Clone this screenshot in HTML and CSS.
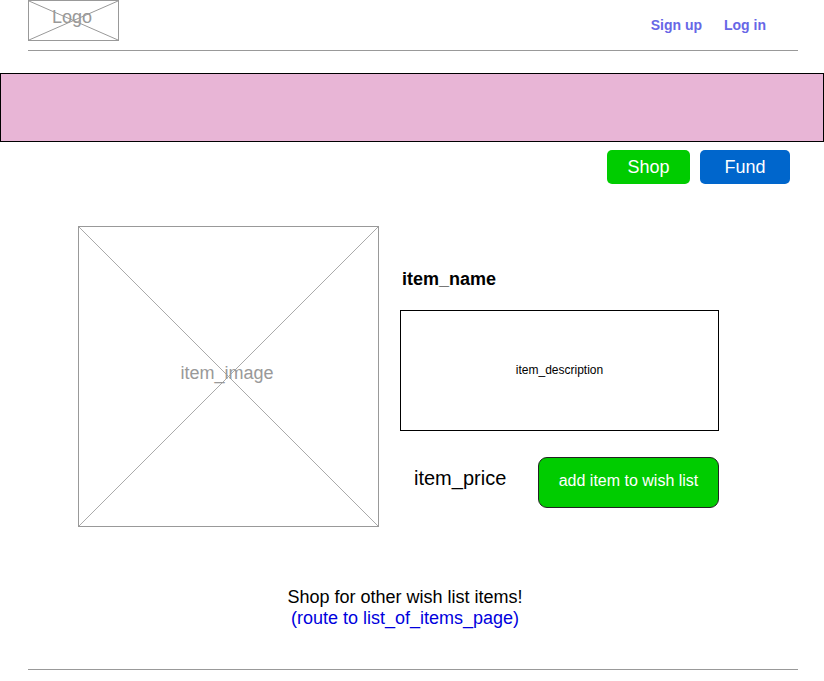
FILE: index.html
```html
<!DOCTYPE html>
<html>
<head>
<meta charset="utf-8">
<link rel="stylesheet" href="styles.css">
</head>
<body>
<header class="top">
  <div class="logo">
    <svg class="xlines" viewBox="0 0 100 100" preserveAspectRatio="none"><line x1="0" y1="0" x2="100" y2="100" vector-effect="non-scaling-stroke"/><line x1="100" y1="0" x2="0" y2="100" vector-effect="non-scaling-stroke"/></svg>
    <span class="logo-text">Logo</span>
  </div>
  <nav class="nav">
    <a class="nav-link">Sign up</a>
    <a class="nav-link">Log in</a>
  </nav>
</header>
<div class="banner"></div>
<div class="actions">
  <button class="btn btn-shop">Shop</button>
  <button class="btn btn-fund">Fund</button>
</div>
<main class="product">
  <div class="image">
    <svg class="xlines" viewBox="0 0 100 100" preserveAspectRatio="none"><line x1="0" y1="0" x2="100" y2="100" vector-effect="non-scaling-stroke"/><line x1="100" y1="0" x2="0" y2="100" vector-effect="non-scaling-stroke"/></svg>
    <span class="image-text">item_image</span>
  </div>
  <div class="details">
    <div class="item-name">item_name</div>
    <div class="desc">item_description</div>
    <div class="price-row">
      <div class="price">item_price</div>
      <button class="add-btn">add item to wish list</button>
    </div>
  </div>
</main>
<section class="more">
  <div class="more-text">Shop for other wish list items!</div>
  <a class="more-link">(route to list_of_items_page)</a>
</section>
<div class="bottom-line"></div>
</body>
</html>
```
FILE: styles.css
```css
* { box-sizing: border-box; }
body {
  margin: 0;
  font-family: "Liberation Sans", Arial, sans-serif;
  color: #000;
  background: #fff;
}
.top {
  margin-left: 28px;
  width: 770px;
  height: 51px;
  border-bottom: 1px solid #999;
  display: flex;
  justify-content: space-between;
  align-items: flex-start;
}
.logo {
  position: relative;
  width: 91px;
  height: 41px;
  border: 1px solid #999;
  display: flex;
  justify-content: center;
  padding-top: 6px;
  padding-right: 3px;
}
.xlines {
  position: absolute;
  left: 0; top: 0;
  width: 100%; height: 100%;
  stroke: #999;
  stroke-width: 1;
}
.image .xlines { stroke: #aaa; }
.logo-text {
  position: relative;
  font-size: 18px;
  line-height: 21px;
  color: #999;
}
.nav {
  display: flex;
  gap: 22px;
  padding-right: 32px;
  padding-top: 17px;
}
.nav-link {
  font-size: 14px;
  line-height: 16px;
  font-weight: bold;
  color: #6767e6;
}
.banner {
  margin-top: 22px;
  height: 69px;
  background: #e8b5d6;
  border: 1px solid #000;
}
.actions {
  margin-top: 8px;
  display: flex;
  justify-content: flex-end;
  gap: 10px;
  padding-right: 34px;
}
.btn {
  height: 34px;
  border: none;
  border-radius: 5px;
  color: #fff;
  font-family: "Liberation Sans", Arial, sans-serif;
  font-size: 18px;
  padding: 0;
}
.btn-shop { width: 83px; background: #00cc00; }
.btn-fund { width: 90px; background: #0066cc; }
.product {
  margin-top: 42px;
  padding-left: 78px;
  display: flex;
  gap: 21px;
}
.image {
  position: relative;
  width: 301px;
  height: 301px;
  border: 1px solid #999;
  display: flex;
  align-items: center;
  justify-content: center;
}
.image-text {
  position: relative;
  font-size: 18px;
  color: #999;
  margin-top: -6px;
  margin-right: 3px;
}
.details {
  width: 319px;
  display: flex;
  flex-direction: column;
}
.item-name {
  margin-top: 43px;
  padding-left: 2px;
  font-size: 18px;
  line-height: 21px;
  font-weight: bold;
}
.desc {
  margin-top: 20px;
  height: 121px;
  border: 1px solid #000;
  display: flex;
  align-items: center;
  justify-content: center;
  font-size: 12px;
  padding-bottom: 2px;
}
.price-row {
  margin-top: 26px;
  display: flex;
  justify-content: space-between;
  align-items: flex-start;
  padding-left: 14px;
}
.price {
  margin-top: 10px;
  font-size: 20px;
  line-height: 23px;
}
.add-btn {
  width: 181px;
  height: 51px;
  background: #00cc00;
  border: 1px solid #222;
  border-radius: 9px;
  color: #fff;
  font-family: "Liberation Sans", Arial, sans-serif;
  font-size: 16px;
  padding: 0 0 3px 0;
}
.more {
  margin-top: 60px;
  padding-right: 14px;
  display: flex;
  flex-direction: column;
  align-items: center;
  font-size: 18px;
  line-height: 21px;
}
.more-link { color: #0000dd; }
.bottom-line {
  margin: 40px 0 0 28px;
  width: 770px;
  border-top: 1px solid #999;
}
```
